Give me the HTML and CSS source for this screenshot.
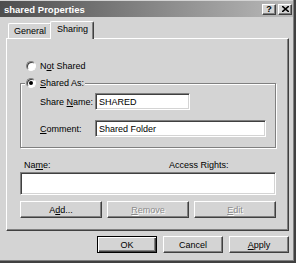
FILE: index.html
```html
<!DOCTYPE html>
<html lang="en">
<head>
    <meta charset="UTF-8">
    <title>shared Properties</title>
    <link rel="stylesheet" href="styles.css">
</head>
<body>
    <div class="window">
        <div class="titlebar">
            <span class="title">shared Properties</span>
            <div class="title-buttons">
                <span class="tbtn">?</span>
                <span class="tbtn">
                    <svg width="7" height="6" viewBox="0 0 7 6"><path d="M0 0L7 6M7 0L0 6" stroke="#000" stroke-width="1.6"/></svg>
                </span>
            </div>
        </div>

        <div class="tabs">
            <div class="tab">General</div>
            <div class="tab active">Sharing</div>
        </div>

        <div class="panel">
            <div class="radio-row first">
                <span class="radio"></span>
                <span>N<u>o</u>t Shared</span>
            </div>

            <fieldset class="group">
                <legend>
                    <span class="radio-row">
                        <span class="radio checked"></span>
                        <span><u>S</u>hared As:</span>
                    </span>
                </legend>
                <div class="field-row top">
                    <span class="field-label">Share <u>N</u>ame:</span>
                    <span class="textbox short">SHARED</span>
                </div>
                <div class="field-row">
                    <span class="field-label"><u>C</u>omment:</span>
                    <span class="textbox long">Shared Folder</span>
                </div>
            </fieldset>

            <div class="list-labels">
                <span class="name-label">Na<u>m</u>e:</span>
                <span>Access Rights:</span>
            </div>
            <div class="listbox"></div>

            <div class="btn-row">
                <button class="btn">A<u>d</u>d...</button>
                <button class="btn" disabled><u>R</u>emove</button>
                <button class="btn" disabled><u>E</u>dit</button>
            </div>
        </div>

        <div class="dialog-buttons">
            <button class="btn small default">OK</button>
            <button class="btn small">Cancel</button>
            <button class="btn small"><u>A</u>pply</button>
        </div>
    </div>
</body>
</html>
```

FILE: styles.css
```css
* {
    box-sizing: border-box;
}
body {
    margin: 0;
    font-family: "Liberation Sans", Arial, sans-serif;
    font-size: 9px;
    color: #000;
    background: #d4d4d4;
}
.window {
    width: 296px;
    height: 263px;
    background: #d4d4d4;
    border-right: 2px solid #404040;
    border-bottom: 2px solid #404040;
    box-shadow: inset -1px -1px #808080;
    overflow: hidden;
}

/* title bar */
.titlebar {
    height: 16px;
    margin: 1px 1px 0 0;
    padding: 0 1px 0 4px;
    display: flex;
    align-items: center;
    background: linear-gradient(to right, #4e4e4e, #bababa);
    color: #fff;
}
.title {
    font-weight: bold;
    font-size: 9.5px;
}
.title-buttons {
    margin-left: auto;
    display: flex;
    gap: 2px;
}
.tbtn {
    width: 14px;
    height: 11px;
    display: flex;
    align-items: center;
    justify-content: center;
    background: #d4d4d4;
    border: 1px solid;
    border-color: #fff #404040 #404040 #fff;
    box-shadow: inset -1px -1px #808080;
    color: #000;
    font-weight: bold;
    font-size: 9px;
}

/* tabs */
.tabs {
    height: 21px;
    padding-left: 8px;
    display: flex;
    align-items: flex-end;
}
.tab {
    height: 15px;
    padding: 0 5px;
    line-height: 14px;
    border: 1px solid;
    border-bottom: none;
    border-color: #fff #404040 #404040 #fff;
    border-radius: 2px 2px 0 0;
    box-shadow: inset -1px 0 #808080;
}
.tab.active {
    height: 18px;
    margin: 0 0 -1px -2px;
    padding: 0 5px 0 6px;
    line-height: 15px;
    background: #d4d4d4;
    position: relative;
    z-index: 1;
}

/* panel */
.panel {
    height: 193px;
    margin: 0 5px 0 6px;
    padding-top: 20px;
    border: 1px solid;
    border-color: #fff #404040 #404040 #fff;
    box-shadow: inset -1px -1px #808080;
}
.radio-row {
    height: 14px;
    display: flex;
    align-items: center;
    gap: 4px;
}
.radio-row.first {
    padding-left: 19px;
}
.radio {
    width: 10px;
    height: 10px;
    border-radius: 50%;
    background: #fff;
    border: 1px solid;
    border-color: #808080 #fff #fff #808080;
    box-shadow: inset 1px 1px #404040;
    display: flex;
    align-items: center;
    justify-content: center;
}
.radio.checked::after {
    content: "";
    width: 4px;
    height: 4px;
    border-radius: 50%;
    background: #000;
}
.group {
    margin: 3px 12px 0 13px;
    padding: 0 0 10px 19px;
    min-width: 0;
    border: 1px solid #808080;
    box-shadow: inset 1px 1px #fff, 1px 1px #fff;
}
.group legend {
    margin-left: -15px;
    padding: 0 1px;
    background: #d4d4d4;
}
.field-row {
    height: 17px;
    margin-top: 10px;
    display: flex;
    align-items: center;
}
.field-row.top {
    margin-top: 3px;
}
.field-label {
    width: 55px;
}
.textbox,
.listbox {
    background: #fff;
    border: 1px solid;
    border-color: #808080 #fff #fff #808080;
    box-shadow: inset 1px 1px #404040, inset -1px -1px #d4d4d4;
}
.textbox {
    height: 17px;
    padding: 0 3px;
    display: flex;
    align-items: center;
}
.textbox.short {
    width: 95px;
}
.textbox.long {
    width: 171px;
}
.list-labels {
    height: 12px;
    margin-top: 11px;
    padding-left: 17px;
    display: flex;
    align-items: center;
}
.name-label {
    width: 145px;
}
.listbox {
    height: 23px;
    margin: 1px 12px 0 13px;
}
.btn-row {
    margin: 6px 0 0 13px;
    display: flex;
    gap: 5px;
}

/* buttons */
.btn {
    width: 82px;
    height: 17px;
    padding: 0;
    font: inherit;
    color: #000;
    background: #d4d4d4;
    border: 1px solid;
    border-color: #fff #404040 #404040 #fff;
    box-shadow: inset -1px -1px #808080;
}
.btn:disabled {
    color: #8c8c8c;
    text-shadow: 1px 1px #fff;
}
.btn.small {
    width: 60px;
}
.btn.default {
    border-color: #000;
    box-shadow: inset 1px 1px #fff, inset -1px -1px #404040, inset -2px -2px #808080;
}
.dialog-buttons {
    margin: 5px 5px 0 0;
    display: flex;
    justify-content: flex-end;
    gap: 6px;
}
```
